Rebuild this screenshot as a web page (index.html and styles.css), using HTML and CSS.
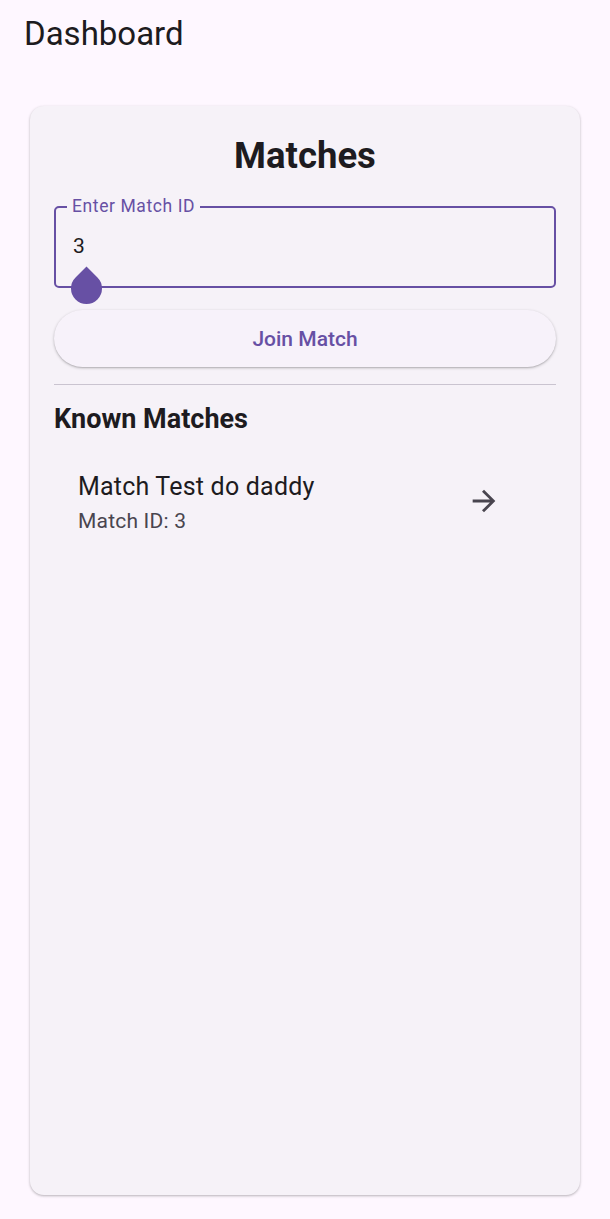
FILE: index.html
```html
<!DOCTYPE html>
<html>
<head>
<meta charset="utf-8">
<link rel="stylesheet" href="styles.css">
</head>
<body>
<header class="appbar">Dashboard</header>
<main class="page">
  <section class="card">
    <h1 class="card-title">Matches</h1>
    <div class="field">
      <span class="field-label">Enter Match ID</span>
      <span class="field-value">3</span>
      <span class="handle"></span>
    </div>
    <button class="join-btn">Join Match</button>
    <hr class="divider">
    <h2 class="section-title">Known Matches</h2>
    <div class="match-item">
      <div class="match-text">
        <div class="match-name">Match Test do daddy</div>
        <div class="match-id">Match ID: 3</div>
      </div>
      <svg class="arrow" viewBox="0 0 24 24" width="34" height="34"><path d="M12 4l-1.41 1.41L16.17 11H4v2h12.17l-5.58 5.59L12 20l8-8z" fill="currentColor"/></svg>
    </div>
  </section>
</main>
</body>
</html>
```
FILE: styles.css
```css
html, body {
  margin: 0;
  padding: 0;
  background: #FEF7FF;
  font-family: Roboto, "Noto Sans", sans-serif;
  color: #1D1B20;
}
body {
  width: 610px;
  height: 1219px;
  display: flex;
  flex-direction: column;
}
.appbar {
  padding: 12px 24px 0 24px;
  height: 94px;
  box-sizing: border-box;
  font-size: 33px;
  line-height: 44px;
  font-weight: 400;
}
.page {
  flex: 1;
  padding: 12px 30px 24px 30px;
  display: flex;
  flex-direction: column;
}
.card {
  flex: 1;
  background: #F6F2F8;
  border-radius: 14px;
  box-shadow: 0 1px 3px rgba(0,0,0,0.22), 0 1px 2px rgba(0,0,0,0.08);
  padding: 24px 24px;
  display: flex;
  flex-direction: column;
}
.card-title {
  margin: 0;
  text-align: center;
  font-size: 36.5px;
  line-height: 52px;
  font-weight: 700;
}
.field {
  position: relative;
  margin-top: 24px;
  height: 82px;
  border: 2px solid #6750A4;
  border-radius: 5px;
  box-sizing: border-box;
  display: flex;
  align-items: center;
  padding-left: 17px;
}
.field-label {
  position: absolute;
  top: -12px;
  left: 11px;
  padding: 0 5px;
  background: #F6F2F8;
  color: #6750A4;
  font-size: 17.5px;
  line-height: 20px;
  letter-spacing: 0.6px;
}
.field-value {
  font-size: 21px;
  line-height: 28px;
  margin-top: -2px;
}
.handle {
  position: absolute;
  left: 15px;
  bottom: -18px;
  width: 31px;
  height: 31px;
  background: #6750A4;
  border-radius: 0 50% 50% 50%;
  transform: rotate(45deg);
}
.join-btn {
  margin-top: 22px;
  height: 57px;
  border: none;
  border-radius: 29px;
  background: #F7F2FA;
  box-shadow: 0 1px 3px rgba(0,0,0,0.25), 0 1px 1px rgba(0,0,0,0.08);
  color: #6750A4;
  font-family: Roboto, "Noto Sans", sans-serif;
  font-size: 21px;
  font-weight: 500;
  padding: 0;
}
.divider {
  margin: 17px 0 0 0;
  border: none;
  border-top: 1px solid #CAC4D0;
  height: 0;
}
.section-title {
  margin: 17px 0 0 0;
  font-size: 27px;
  line-height: 34px;
  font-weight: 700;
}
.match-item {
  margin-top: 34px;
  display: flex;
  align-items: flex-start;
  padding: 0 55px 0 24px;
}
.match-text {
  flex: 1;
}
.match-name {
  font-size: 25px;
  line-height: 34px;
  letter-spacing: 0.2px;
}
.match-id {
  margin-top: 2px;
  font-size: 21px;
  line-height: 30px;
  color: #49454F;
  letter-spacing: 0.2px;
}
.arrow {
  color: #49454F;
  flex: none;
  margin-top: 14px;
}
```
